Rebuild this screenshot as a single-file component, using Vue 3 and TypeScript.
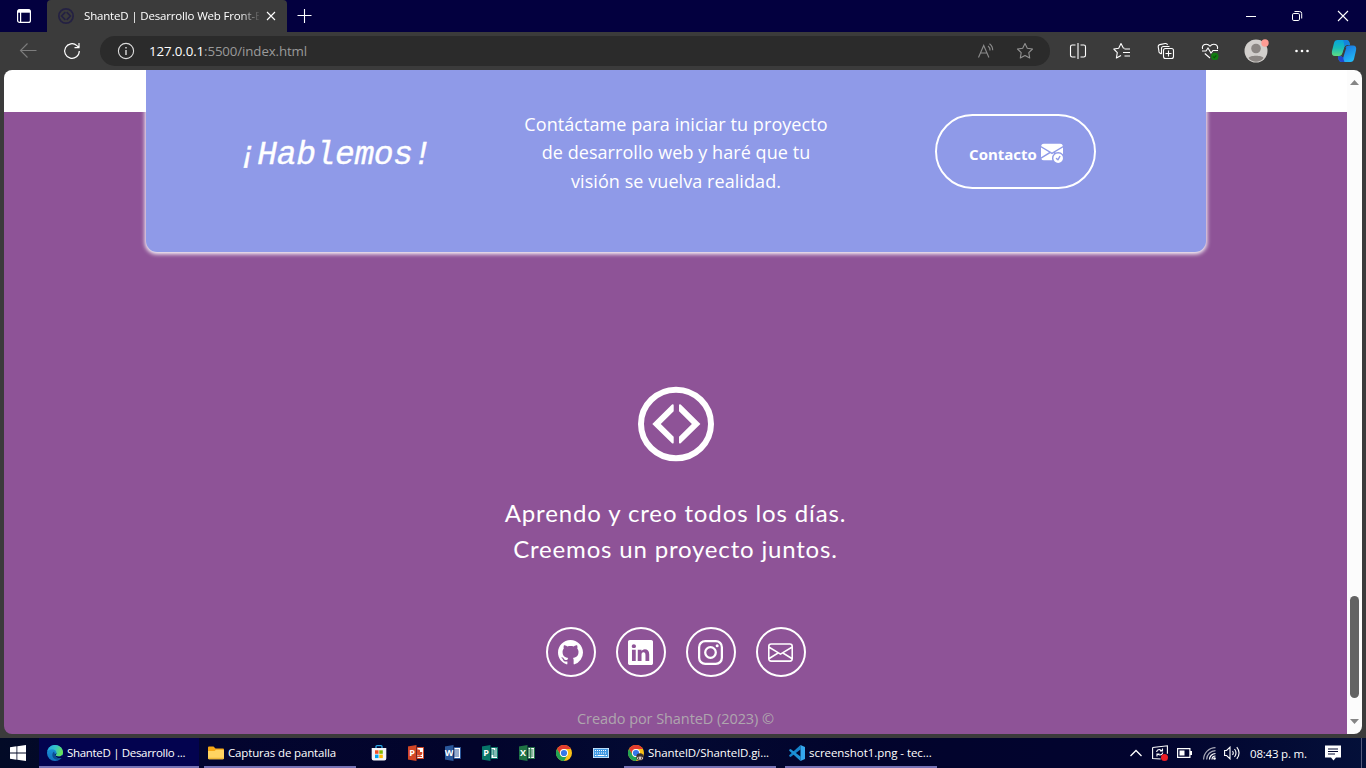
<script setup lang="ts">
interface Social { name: string; path?: string }
interface Office { letter: string; color: string }

const envelope = 'M0 4a2 2 0 0 1 2-2h12a2 2 0 0 1 2 2v8a2 2 0 0 1-2 2H2a2 2 0 0 1-2-2zm2-1a1 1 0 0 0-1 1v.217l7 4.2 7-4.2V4a1 1 0 0 0-1-1zm13 2.383-4.708 2.825L15 11.105zm-.034 6.876-5.64-3.471L8 9.583l-1.326-.795-5.64 3.47A1 1 0 0 0 2 13h12a1 1 0 0 0 .966-.741M1 11.105l4.708-2.897L1 5.383z'
const github = 'M8 0C3.58 0 0 3.58 0 8c0 3.54 2.29 6.53 5.47 7.59.4.07.55-.17.55-.38 0-.19-.01-.82-.01-1.49-2.01.37-2.53-.49-2.69-.94-.09-.23-.48-.94-.82-1.13-.28-.15-.68-.52-.01-.53.63-.01 1.08.58 1.23.82.72 1.21 1.87.87 2.33.66.07-.52.28-.87.51-1.07-1.78-.2-3.64-.89-3.64-3.95 0-.87.31-1.59.82-2.15-.08-.2-.36-1.02.08-2.12 0 0 .67-.21 2.2.82.64-.18 1.32-.27 2-.27s1.36.09 2 .27c1.53-1.04 2.2-.82 2.2-.82.44 1.1.16 1.92.08 2.12.51.56.82 1.27.82 2.15 0 3.07-1.87 3.75-3.65 3.95.29.25.54.73.54 1.48 0 1.07-.01 1.93-.01 2.2 0 .21.15.46.55.38A8.01 8.01 0 0 0 16 8c0-4.42-3.58-8-8-8'
const linkedin = 'M0 1.146C0 .513.526 0 1.175 0h13.65C15.474 0 16 .513 16 1.146v13.708c0 .633-.526 1.146-1.175 1.146H1.175C.526 16 0 15.487 0 14.854zm4.943 12.248V6.169H2.542v7.225zm-1.2-8.212c.837 0 1.358-.554 1.358-1.248-.015-.709-.52-1.248-1.342-1.248S2.4 3.226 2.4 3.934c0 .694.521 1.248 1.327 1.248zm4.908 8.212V9.359c0-.216.016-.432.08-.586.173-.431.568-.878 1.232-.878.869 0 1.216.662 1.216 1.634v3.865h2.401V9.25c0-2.22-1.184-3.252-2.764-3.252-1.274 0-1.845.7-2.165 1.193v.025h-.016l.016-.025V6.169h-2.4c.03.678 0 7.225 0 7.225z'

const socials: Social[] = [
  { name: 'github', path: github },
  { name: 'linkedin', path: linkedin },
  { name: 'instagram' },
  { name: 'mail', path: envelope },
]

const office: Office[] = [
  { letter: 'P', color: '#d24625' },
  { letter: 'W', color: '#2a579a' },
  { letter: 'P', color: '#077568' },
  { letter: 'X', color: '#1f7244' },
]
</script>

<template>
  <div class="screen">
    <header class="titlebar">
      <div class="workspaces">
        <svg width="16" height="16" viewBox="0 0 16 16" fill="none" stroke="#fff" stroke-width="1.2">
          <rect x="1.6" y="1.6" width="12.8" height="12.8" rx="2" />
          <path d="M2 3.2h12" stroke-width="3" />
          <path d="M4.6 4v10" />
        </svg>
      </div>
      <div class="tab">
        <svg class="favicon" width="16" height="16" viewBox="0 0 76 76">
          <circle cx="38" cy="38" r="34" fill="none" stroke="#242143" stroke-width="8" />
          <path d="M35 20 17 38l18 18M41 20l18 18-18 18" fill="none" stroke="#242143" stroke-width="8" />
        </svg>
        <span class="tab-title">ShanteD | Desarrollo Web Front-E</span>
        <svg class="tab-close" width="10" height="10" viewBox="0 0 10 10" stroke="#fff" stroke-width="1.1"><path d="m1 1 8 8M9 1 1 9" /></svg>
      </div>
      <div class="newtab">
        <svg width="16" height="16" viewBox="0 0 16 16" stroke="#fff" stroke-width="1.1"><path d="M7.500 1v14M.5 7.500h14" /></svg>
      </div>
      <div class="controls">
        <svg width="46" height="32" viewBox="0 0 46 32" stroke="#fff"><path d="M18 16.5h10" /></svg>
        <svg width="46" height="32" viewBox="0 0 46 32" stroke="#fff" fill="none"><rect x="18.5" y="13.5" width="7" height="7" rx="1.3" /><path d="M20.5 11.5h5.200a2 2 0 0 1 2 2v5" /></svg>
        <svg width="46" height="32" viewBox="0 0 46 32" stroke="#fff" stroke-width="1.1"><path d="m18 11 10 10M28 11 18 21" /></svg>
      </div>
    </header>

    <div class="toolbar">
      <div class="tool back">
        <svg width="18" height="16" viewBox="0 0 18 16" fill="none" stroke="#7d7d7d" stroke-width="1.1"><path d="M17.500 7.500H1.500M8.500.5 1.500 7.500l7 7" /></svg>
      </div>
      <div class="tool reload">
        <svg width="18" height="18" viewBox="0 0 18 18" fill="none" stroke="#fff" stroke-width="1.2"><path d="M16.300 9a7.300 7.300 0 1 1-2.400-5.400L16 5.500M16 1v4.700h-4.500" /></svg>
      </div>
      <div class="address">
        <svg class="info" width="18" height="18" viewBox="0 0 18 18" fill="none" stroke="#ddd" stroke-width="1.1"><circle cx="9" cy="9" r="7.600" /><path d="M9 8v5M9 5v1.500" stroke-width="1.400" /></svg>
        <span class="url"><b>127.0.0.1</b>:5500/index.html</span>
        <svg class="read" width="18" height="18" viewBox="0 0 18 18" fill="none" stroke="#8b8b8b" stroke-width="1.100"><path d="m1.500 15.500 5.200-12 5.200 12M3.500 11h6.500M11 4a5 5 0 0 1 2 4.500M12.500 1.800a8 8 0 0 1 3.200 6.500" /></svg>
        <svg class="star" width="18" height="18" viewBox="0 0 18 18" fill="none" stroke="#929292" stroke-width="1.100" stroke-linejoin="round"><path d="m9 1.500 2.300 4.700 5.200.8-3.700 3.700.9 5.300L9 13.500 4.300 16l.9-5.300L1.500 7l5.200-.8z" /></svg>
      </div>
      <div class="tool split">
        <svg width="18" height="18" viewBox="0 0 18 18" fill="none" stroke="#fff" stroke-width="1.100"><path d="M6.500 3H3.200C2.200 3 1.500 3.700 1.500 4.700v8.600c0 1 .7 1.700 1.700 1.700h3.300M11.500 3h3.300c1 0 1.700.7 1.700 1.700v8.600c0 1-.7 1.700-1.700 1.700h-3.300M9 1v16" /></svg>
      </div>
      <div class="tool">
        <svg width="18" height="18" viewBox="0 0 18 18" fill="none" stroke="#fff" stroke-width="1.100" stroke-linejoin="round"><path d="M11.500 6.300 10.300 6 8 1.500 5.700 6.200.8 7l3.500 3.600-.9 5.400L8 13.500M11.500 7H17M10 10.500h7M11.500 14H17" /></svg>
      </div>
      <div class="tool">
        <svg width="18" height="18" viewBox="0 0 18 18" fill="none" stroke="#fff" stroke-width="1.100"><rect x="6.500" y="6.500" width="10" height="10" rx="2" /><path d="M11.500 8.500v6M8.500 11.500h6M4.500 12 2.800 11A2 2 0 0 1 1.900 8.800L1.200 4.800a2 2 0 0 1 1.500-2.200l5.500-1.100a2 2 0 0 1 2.300 1.500M4.500 12V6.500a2 2 0 0 1 2-2h6" /></svg>
      </div>
      <div class="tool">
        <svg width="18" height="18" viewBox="0 0 18 18" fill="none" stroke="#fff" stroke-width="1.100"><path d="M1.600 7C.4 2.700 5.800.4 9 4.200 12.200.4 17.600 2.700 16.400 7M1 9h4l2-3 3 5 2-2.500h5M3.800 11.500 9 16" /><circle cx="13.800" cy="14.500" r="3.700" fill="#107c10" stroke="none" /><path d="m12.200 14.600 1.100 1 2-2.200" stroke="#0b4d0b" /></svg>
      </div>
      <div class="tool avatar">
        <svg width="26" height="26" viewBox="0 0 26 26"><circle cx="12" cy="13" r="11.500" fill="#d2cfcc" /><circle cx="12" cy="10.500" r="4.800" fill="#8b8683" /><path d="M4.500 20c1-3 14-3 15 0-3.500 5-11.500 5-15 0" fill="#8b8683" /><circle cx="21" cy="5" r="3.700" fill="#ff9c94" /></svg>
      </div>
      <div class="tool dots">
        <svg width="16" height="4" viewBox="0 0 16 4" fill="#fff"><circle cx="2.500" cy="2" r="1.300" /><circle cx="8" cy="2" r="1.300" /><circle cx="13.500" cy="2" r="1.300" /></svg>
      </div>
      <div class="tool copilot">
        <svg width="26" height="24" viewBox="0 0 26 24">
          <defs>
            <linearGradient id="ca" x1="0" y1="0" x2="0" y2="1"><stop offset="0" stop-color="#08a3dc" /><stop offset=".5" stop-color="#18bcb8" /><stop offset="1" stop-color="#5fdc82" /></linearGradient>
            <linearGradient id="cb" x1="0" y1="0" x2=".6" y2="1"><stop offset="0" stop-color="#1763d8" /><stop offset="1" stop-color="#22b8f6" /></linearGradient>
          </defs>
          <path d="M6.500 1H15q3 0 3.500 3L19 6h-3q-2 0-2.500 2l-2 6q-.8 3-3.500 3H4q-4 0-3-5L3 4q.7-3 3.500-3" fill="url(#ca)" />
          <path d="M12 1h3q3 0 3.500 3L19 6h-3q-2 0-2.600 2.300Q13.500 4 12 1" fill="#1682dc" />
          <path d="M19.500 23H11q-3 0-3.500-3L7 17.500h2.500q2 0 2.700-2.500l1.900-6q.8-2.500 3.500-2.500H22q4 0 3 5L23 20q-.7 3-3.500 3" fill="url(#cb)" />
          <path d="M11 23q-3 0-3.500-3L7 17.500h2.500q2 0 2.700-2.500-.2 5 1.300 8z" fill="#2147ce" />
          <path d="M14.500 8.500 11.500 18" stroke="#3b3b3b" stroke-width="1.600" />
        </svg>
      </div>
    </div>

    <div class="viewport">
      <main class="page">
        <section class="cta">
          <h2>¡Hablemos!</h2>
          <p>Contáctame para iniciar tu proyecto<br>de desarrollo web y haré que tu<br>visión se vuelva realidad.</p>
          <a class="contact">
            <span>Contacto</span>
            <svg width="22" height="22" viewBox="0 0 16 16" fill="#fff"><path d="M.05 3.555A2 2 0 0 1 2 2h12a2 2 0 0 1 1.950 1.555L8 8.414zM0 4.697v7.104l5.803-3.558zM6.761 8.830l-6.570 4.026A2 2 0 0 0 2 14h6.256A4.500 4.500 0 0 1 8 12.500a4.490 4.490 0 0 1 1.606-3.446l-.367-.225L8 9.586zM16 4.697v4.974A4.500 4.500 0 0 0 12.500 8a4.500 4.500 0 0 0-1.965.45l-.338-.207z" /><path d="M16 12.500a3.500 3.500 0 1 1-7 0 3.500 3.500 0 0 1 7 0m-1.993-1.679a.5.5 0 0 0-.686.172l-1.170 1.950-.547-.547a.5.5 0 0 0-.708.708l.774.773a.750.750 0 0 0 1.174-.144l1.335-2.226a.5.5 0 0 0-.172-.686" /></svg>
          </a>
        </section>
        <footer class="foot">
          <svg class="logo" width="76" height="76" viewBox="0 0 76 76">
            <ellipse cx="38" cy="38" rx="35" ry="34.300" fill="none" stroke="#fff" stroke-width="6" />
            <path d="M35.700 19.500q0-1.800-1.700-1L14.300 38 34 57.200q1.700 1 1.700-.7v-5.700L22.800 38l12.900-12.800zM41 19.500q0-1.800 1.700-1L62.400 38 42.700 57.200q-1.700 1-1.700-.7v-5.700L53.900 38 41 25.200z" fill="#fff" />
          </svg>
          <p class="tagline"><span class="t1">Aprendo y creo todos los días.</span><br><span class="t2">Creemos un proyecto juntos.</span></p>
          <nav class="socials">
            <a v-for="s in socials" :key="s.name">
              <svg width="25" height="25" viewBox="0 0 16 16" fill="#fff">
                <path v-if="s.path" :d="s.path" />
                <g v-else fill="none" stroke="#fff" stroke-width="1.440"><rect x=".720" y=".720" width="14.560" height="14.560" rx="3.900" /><circle cx="8" cy="8" r="3.390" /><circle cx="12.270" cy="3.730" r=".960" fill="#fff" stroke="none" /></g>
              </svg>
            </a>
          </nav>
          <p class="credit">Creado por ShanteD (2023) ©</p>
        </footer>
      </main>
      <div class="scrollbar">
        <svg width="9" height="5" viewBox="0 0 9 5" fill="#858585"><path d="M0 5 4.500 0 9 5z" /></svg>
        <div class="thumb"></div>
        <svg width="9" height="5" viewBox="0 0 9 5" fill="#858585"><path d="M0 0 4.500 5 9 0z" /></svg>
      </div>
    </div>

    <div class="taskbar">
      <div class="start">
        <svg width="16" height="16" viewBox="0 0 16 16" fill="#fff"><path d="M0 2.300 6.500 1.300v6.200H0zM7.300 1.200 16 0v7.500H7.300zM0 8.400h6.500v6.300L0 13.700zM7.300 8.400H16V16l-8.700-1.200z" /></svg>
      </div>
      <div class="task active">
        <svg width="16" height="16" viewBox="0 0 16 16">
          <defs>
            <linearGradient id="e1" x1="0" y1="0" x2="1" y2=".3"><stop offset="0" stop-color="#25a6df" /><stop offset=".55" stop-color="#35c3c7" /><stop offset="1" stop-color="#66e05a" /></linearGradient>
            <linearGradient id="e2" x1="0" y1="0" x2="0" y2="1"><stop offset="0" stop-color="#1b98df" /><stop offset="1" stop-color="#1370bd" /></linearGradient>
          </defs>
          <circle cx="8" cy="8" r="8" fill="url(#e2)" />
          <path d="M.3 6.500C1.500 2 4.500 0 8.200 0 13 0 16 3.800 16 7.200c0 3-2.300 4.200-4.400 4.200-2 0-3-.7-3-1.200 0-.4.9-.8.9-2.300C9.500 6 7.600 4.300 5 4.300 2.800 4.300 1 5.300.3 6.500" fill="url(#e1)" />
          <path d="M7 6.500c-3 2.200-2 7.800 3 8.200 2.200.1 4-.7 5-2-3.500 1.500-7.300 0-7-3.200z" fill="#0c4b91" />
          <path d="M9.500 8c0 1.300-.9 1.700-.9 2.200 0 .6 1.300 1.300 3.200 1.200 1.500 0 2.700-.6 3.500-1.500L16 11l-1 2c-4 .5-7-.6-7-3.500z" fill="#03034f" />
        </svg>
        <span class="k1">ShanteD | Desarrollo ...</span>
      </div>
      <div class="task folder">
        <svg width="16" height="16" viewBox="0 0 16 16"><path d="M0 2.500Q0 1.500 1 1.500h4.500L7.500 3.500H15q1 0 1 1V8H0z" fill="#f5a614" /><path d="M0 6h6.500L8 4.700h7q1 0 1 1v7.500q0 1-1 1H1q-1 0-1-1z" fill="#ffd461" /><path d="M0 12.800h16q0 1.400-1 1.400H1q-1 0-1-1.400" fill="#f0b93a" /></svg>
        <span class="k2">Capturas de pantalla</span>
      </div>
      <div class="pins">
        <div class="pin">
          <svg width="16" height="16" viewBox="0 0 16 16"><path d="M5 4V1.600Q5 .7 6 .7h4q1 0 1 .9V4" fill="none" stroke="#29a9e8" stroke-width="1.300" /><path d="M.7 3h14.600v10.500q0 2-2 2H2.700q-2 0-2-2z" fill="#f4f5f8" /><path d="M4 5.300h3.500v3.500H4z" fill="#f25022" /><path d="M8.300 5.300h3.500v3.500H8.300z" fill="#7fba00" /><path d="M4 9.600h3.500v3.500H4z" fill="#00a4ef" /><path d="M8.300 9.600h3.500v3.500H8.300z" fill="#ffb900" /></svg>
        </div>
        <div v-for="(o, i) in office" :key="i" class="pin">
          <div class="office" :style="{ '--c': o.color }">
            <b>{{ o.letter }}</b>
            <svg width="7" height="12" viewBox="0 0 7 12">
              <path d="M0 .5h6.500v11H0z" fill="#fff" stroke="var(--c)" />
              <path v-if="i === 0" d="M0 3h2.500v2.500H5A2.500 2.500 0 0 1 0 6zM0 9.500h5" stroke="var(--c)" fill="var(--c)" />
              <path v-else-if="i === 1" d="M0 3h5M0 5h5M0 7h5M0 9h5" stroke="var(--c)" />
              <path v-else-if="i === 2" d="M0 3h3v7M5 1v9M0 5h3M0 7h3" stroke="var(--c)" fill="none" />
              <path v-else d="M0 3h5.500M0 5h5.500M0 7h5.500M0 9h5.500M2.700 1v10" stroke="var(--c)" fill="none" />
            </svg>
          </div>
        </div>
        <div class="pin">
          <svg width="16" height="16" viewBox="0 0 16 16"><circle cx="8" cy="8" r="8" fill="#fbc116" /><path d="M1.070 4A8 8 0 0 1 14.930 4H8a4 4 0 0 0-3.460 6z" fill="#e33b2e" /><path d="M1.070 4A8 8 0 0 0 8 16l3.460-6A4 4 0 0 1 4.540 10z" fill="#21a355" /><circle cx="8" cy="8" r="4" fill="#fff" /><circle cx="8" cy="8" r="3.100" fill="#3478ea" /></svg>
        </div>
        <div class="pin">
          <svg width="16" height="10" viewBox="0 0 16 10"><path d="M0 0h16v10H0z" fill="#d8ecfc" /><path d="M.8.800h14.400v8.400H.8z" fill="#3f98e4" /><path d="M2 2.500h12M2 5h12" stroke="#fff" stroke-width="1" stroke-dasharray="1 1" /><path d="M2 7.500h1.500M4.500 7.500h7M12.500 7.500H14" stroke="#fff" stroke-width="1" /></svg>
        </div>
      </div>
      <div class="task chrome">
        <svg width="16" height="16" viewBox="0 0 16 16"><circle cx="8" cy="8" r="8" fill="#fbc116" /><path d="M1.070 4A8 8 0 0 1 14.930 4H8a4 4 0 0 0-3.460 6z" fill="#e33b2e" /><path d="M1.070 4A8 8 0 0 0 8 16l3.460-6A4 4 0 0 1 4.540 10z" fill="#21a355" /><circle cx="8" cy="8" r="4" fill="#fff" /><circle cx="8" cy="8" r="3.100" fill="#3478ea" /><circle cx="12" cy="12" r="3.700" fill="#3c3230" /><path d="M9 12.500q3-2 6 0v1.500q-3 1.500-6 0z" fill="#d9c8bd" /><path d="M10.500 12.500v1.300M13.500 12.500v1.300" stroke="#3c2020" /></svg>
        <span class="k3">ShantelD/ShantelD.gi...</span>
      </div>
      <div class="task code">
        <svg width="16" height="16" viewBox="0 0 16 16"><path d="M11.500 4.400 1.600 12 .2 11.200v-1L11.500 0z" fill="#1583ca" /><path d="M11.500 11.600 1.600 4 .2 4.800v1L11.500 16z" fill="#1d92d6" /><path d="M11.500 0 16 2v12l-4.500 2z" fill="#35a7ee" /></svg>
        <span class="k4">screenshot1.png - tec...</span>
      </div>
      <div class="tray">
        <svg class="up" width="12" height="8" viewBox="0 0 12 8" fill="none" stroke="#fff" stroke-width="1.300"><path d="m.5 7 5.500-5.500L11.500 7" /></svg>
        <svg class="sync" width="16" height="16" viewBox="0 0 16 16" fill="none" stroke="#fff" stroke-width="1.100"><path d="M.6 2.500 15.400.8v8M.6 2.500v11l8 .5M4.600 7Q5 4.500 7.500 4.500l2.500 1.200M10.500 3.500V6H8M10.800 7.500Q10.300 10 7.800 10l-2.300-.8M5 11.500V9h2.500" /><circle cx="12.500" cy="12.500" r="3.500" fill="#ec1c24" stroke="none" /></svg>
        <svg class="battery" width="15" height="10" viewBox="0 0 15 10"><path d="M.6.600h12.300v8.800H.6z" fill="none" stroke="#fff" stroke-width="1.200" /><path d="M2.500 2.500h5v5h-5zM13 3h2v4h-2z" fill="#fff" /></svg>
        <svg class="wifi" width="13" height="13" viewBox="0 0 13 13" fill="none"><path d="M.6 12.500A12 12 0 0 1 12.500.6M3.600 12.500a9 9 0 0 1 8.900-8.900" stroke="#a8a9b8" stroke-width="1.200" /><path d="M6.500 12.500a6 6 0 0 1 6-6M9 12.500a3.500 3.500 0 0 1 3.500-3.500" stroke="#fff" stroke-width="1.200" /><circle cx="11.500" cy="11.500" r="1.300" fill="#fff" /></svg>
        <svg class="volume" width="16" height="14" viewBox="0 0 16 14" fill="none" stroke="#fff" stroke-width="1.100"><path d="M.6 4.500h2L6 1.200v11.600L2.600 9.500h-2zM8.500 5q1.500 2 0 4M10.500 3q3 4 0 8M12.800 1.200q4.500 5.800 0 11.600" /></svg>
        <span class="clock">08:43 p. m.</span>
        <svg class="notice" width="16" height="16" viewBox="0 0 16 16"><path d="M0 .500h16v12h-5L8.500 15.500 6 12.500H0z" fill="#fff" /><path d="M3 4h10M3 6.500h10M3 9h7" stroke="#03082f" stroke-width="1.100" /></svg>
        <i class="peek"></i>
      </div>
    </div>
  </div>
</template>

<style>
html, body { margin: 0; overflow: hidden; }
</style>

<style scoped>
.screen { width: 1366px; height: 768px; display: flex; flex-direction: column; background: #3b3b3b; font-family: "Open Sans", sans-serif; color: #fff; overflow: hidden; }
svg { display: block; flex: none; }
.titlebar { height: 32px; display: flex; background: #03003f; }
.workspaces { width: 47px; display: flex; align-items: center; justify-content: center; }
.tab { width: 240px; display: flex; align-items: center; background: #3b3b3b; border-radius: 4px 4px 0 0; box-sizing: border-box; padding: 0 11px; }
.tab-title { width: 175px; margin-left: 10px; white-space: nowrap; font-size: 11.500px; letter-spacing: -.17px; line-height: 32px; -webkit-mask-image: linear-gradient(90deg, #000 155px, transparent 177px); mask-image: linear-gradient(90deg, #000 155px, transparent 177px); }
.tab-close { margin-left: 7px; }
.newtab { width: 35px; display: flex; align-items: center; justify-content: center; }
.controls { margin-left: auto; display: flex; }
.toolbar { height: 38px; display: flex; align-items: center; }
.tool { width: 44px; display: flex; justify-content: center; }
.back { width: 56px; }
.reload { width: 32px; }
.address { width: 950px; height: 30px; margin-left: 12px; border-radius: 15px; background: #2b2b2b; display: flex; align-items: center; }
.info { margin-left: 17px; }
.url { margin-left: 14px; font-size: 13.300px; letter-spacing: -.12px; line-height: 30px; color: #9a9a9a; white-space: nowrap; }
.url b { font-weight: 400; color: #fff; }
.read { margin-left: auto; }
.star { margin-left: 21px; margin-right: 16px; }
.split { width: 45px; margin-left: 5px; }
.avatar { width: 46px; margin-left: 2px; }
.copilot { width: 40px; }
.viewport { width: 1358px; height: 664px; margin-left: 4px; display: flex; border-radius: 8px; overflow: hidden; }
.page { width: 1343px; background: linear-gradient(#fff 42px, #8e5397 42px); }
.scrollbar { width: 15px; box-sizing: border-box; background: #fcfcfc; padding: 10px 0; display: flex; flex-direction: column; align-items: center; }
.thumb { width: 9px; height: 102px; border-radius: 5px; background: #636363; margin: auto 0 21px; }
.cta { width: 1060px; height: 182px; box-sizing: border-box; margin-left: 142px; padding: 0 20px 18px; background: #8f9ae8; border-radius: 0 0 11px 11px; box-shadow: 0 1px 4px 1px #fff; display: grid; grid-template-columns: repeat(3, 340px); align-items: center; justify-items: center; }
.cta h2 { margin: 8px 2px 0 0; font: italic 400 33px/48px "Liberation Mono", monospace; letter-spacing: -.4px; -webkit-text-stroke: .35px #fff; }
.cta p { margin: 1px 0 0; font-size: 18px; letter-spacing: .07px; line-height: 28.500px; text-align: center; white-space: nowrap; }
.contact { width: 161px; height: 75px; margin: 0 2px 2px 0; box-sizing: border-box; border: 2px solid #fff; border-radius: 38px; display: flex; align-items: center; justify-content: center; gap: 4px; padding-left: 2px; font-size: 15px; font-weight: 700; }
.contact span { padding-top: 5px; }
.contact svg { margin-top: 1px; }
.foot { display: flex; flex-direction: column; align-items: center; }
.logo { margin-top: 134px; }
.tagline { margin: 33px 0 0; font: 400 24px/36px Lato, sans-serif; text-align: center; white-space: nowrap; }
.t1 { letter-spacing: .88px; }
.t2 { letter-spacing: .82px; }
.socials { display: flex; gap: 20px; margin-top: 60px; }
.socials a { width: 50px; height: 50px; box-sizing: border-box; border: 2px solid #fff; border-radius: 50%; display: flex; align-items: center; justify-content: center; padding-top: 1px; }
.credit { margin: 31px 0 0; font-size: 14.500px; letter-spacing: -.07px; line-height: 22px; color: #aea6ae; white-space: nowrap; }
.taskbar { height: 30px; margin-top: 4px; display: flex; background: linear-gradient(90deg, #020a26, #03052f 15%, #02042b 35%, #030a33 48%, #02042c 62%, #02042f 85%, #041039 100%); font-size: 11.500px; }
.start { width: 39px; display: flex; align-items: center; padding-left: 10px; box-sizing: border-box; }
.task { width: 152px; box-sizing: border-box; border-bottom: 2px solid #7673b5; display: flex; align-items: center; gap: 4px; padding: 2px 0 0 4px; white-space: nowrap; line-height: 26px; }
.task.active { width: 160px; padding-left: 8px; background: #03034f; }
.k1 { letter-spacing: -.32px; }
.k2 { letter-spacing: -.15px; }
.k3 { letter-spacing: -.07px; }
.k4 { letter-spacing: -.05px; }
.folder { margin-left: 5px; }
.pins { display: flex; margin-left: 4px; }
.pin { width: 37px; display: flex; align-items: center; justify-content: center; }
.office { width: 16px; height: 16px; display: flex; align-items: center; }
.office b { width: 10px; height: 16px; background: var(--c); clip-path: polygon(0 10%, 100% 0, 100% 100%, 0 90%); font-size: 9px; line-height: 16px; text-align: center; }
.chrome { margin-left: 5px; }
.code { margin-left: 9px; }
.tray { margin-left: auto; display: flex; align-items: center; width: 236px; }
.sync { margin-left: 10px; }
.battery { margin-left: 9px; }
.wifi { margin-left: 11px; }
.volume { margin-left: 8px; }
.clock { width: 66px; margin-left: 10px; white-space: nowrap; letter-spacing: -.2px; }
.notice { margin-left: 9px; }
.peek { width: 1px; height: 30px; background: #555a7c; margin-left: 20px; }
</style>
